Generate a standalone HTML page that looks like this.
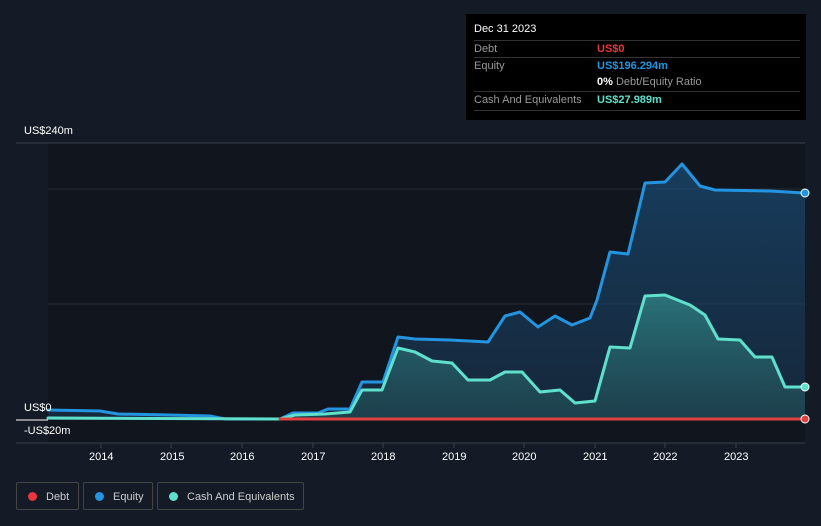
<!DOCTYPE html>
<html><head><meta charset="utf-8"><style>
body{margin:0;width:821px;height:526px;background:#151b26;font-family:"Liberation Sans",sans-serif;overflow:hidden;position:relative}
.t{position:absolute;font-size:11px;color:#fff}
.tip{position:absolute;left:466px;top:14px;width:340px;height:106px;background:#000}
.row{position:absolute;left:8px;width:326px;font-size:11px;color:#999;border-top:1px solid #333;height:17px;line-height:17px}
.leg{position:absolute;top:482px;height:28px;border:1px solid #444;border-radius:2px;color:#ccc;font-size:11px;line-height:28px;box-sizing:border-box}
.dot{display:inline-block;width:9px;height:9px;border-radius:50%;margin:0 9px 0 11px;vertical-align:-1px}
</style></head><body>
<svg width="821" height="526" style="position:absolute;left:0;top:0">
<defs>
<linearGradient id="ge" x1="0" y1="0" x2="0" y2="1"><stop offset="0" stop-color="#1a4a72" stop-opacity=".75"/><stop offset="1" stop-color="#1a3a58" stop-opacity=".5"/></linearGradient>
<linearGradient id="gc" x1="0" y1="0" x2="0" y2="1"><stop offset="0" stop-color="#3aa8a0" stop-opacity=".55"/><stop offset="1" stop-color="#2a6a6a" stop-opacity=".35"/></linearGradient>
</defs>
<rect x="48" y="143" width="757" height="300" fill="#10151e"/>
<line x1="16" y1="143" x2="805" y2="143" stroke="#3a404a"/>
<line x1="48" y1="189" x2="805" y2="189" stroke="#262c36"/>
<line x1="48" y1="304" x2="805" y2="304" stroke="#262c36"/>
<line x1="16" y1="443" x2="805" y2="443" stroke="#3a404a"/>
<line x1="16" y1="420" x2="48" y2="420" stroke="#fff"/>
<g stroke="#3a404a"><line x1="101" y1="443" x2="101" y2="448"/><line x1="171" y1="443" x2="171" y2="448"/><line x1="242" y1="443" x2="242" y2="448"/><line x1="313" y1="443" x2="313" y2="448"/><line x1="383" y1="443" x2="383" y2="448"/><line x1="454" y1="443" x2="454" y2="448"/><line x1="524" y1="443" x2="524" y2="448"/><line x1="595" y1="443" x2="595" y2="448"/><line x1="665" y1="443" x2="665" y2="448"/><line x1="736" y1="443" x2="736" y2="448"/></g>
<polygon fill="url(#ge)" points="48,410 100,411 118,414 170,415 210,416 225,419 280,419 293,413 318,413 328,409 350,409 362,382 383,382 398,337 415,339 450,340 488,342 505,316 520,312 538,327 555,316 572,325 590,318 597,300 610,252 628,254 645,183 665,182 682,164 700,186 715,190 770,191 805,193 805,420 48,420"/>
<polygon fill="url(#gc)" points="48,418 280,419 295,415 325,414 350,412 362,390 382,390 398,348 415,352 432,361 452,363 468,380 490,380 505,372 522,372 540,392 560,390 575,403 595,401 610,347 630,348 645,296 665,295 690,305 705,315 718,339 740,340 755,357 772,357 785,387 805,387 805,420 48,420"/>
<g fill="none" stroke-width="3" stroke-linejoin="round" stroke-linecap="round">
<polyline stroke="#2394e0" points="48,410 100,411 118,414 170,415 210,416 225,419 280,419 293,413 318,413 328,409 350,409 362,382 383,382 398,337 415,339 450,340 488,342 505,316 520,312 538,327 555,316 572,325 590,318 597,300 610,252 628,254 645,183 665,182 682,164 700,186 715,190 770,191 805,193"/>
<polyline stroke="#5ee0cc" points="48,418 280,419 295,415 325,414 350,412 362,390 382,390 398,348 415,352 432,361 452,363 468,380 490,380 505,372 522,372 540,392 560,390 575,403 595,401 610,347 630,348 645,296 665,295 690,305 705,315 718,339 740,340 755,357 772,357 785,387 805,387"/>
<polyline stroke="#e04040" points="280,419 805,419"/>
</g>
<circle cx="805" cy="193" r="4" fill="#2394e0" stroke="#fff"/>
<circle cx="805" cy="387" r="4" fill="#5ee0cc" stroke="#fff"/>
<circle cx="805" cy="419" r="4" fill="#e04040" stroke="#fff"/>
</svg>
<div class="t" style="left:24px;top:125px">US$240m</div>
<div class="t" style="left:24px;top:402px">US$0</div>
<div class="t" style="left:24px;top:425px">-US$20m</div>
<div class="t" style="left:89px;top:451px">2014</div><div class="t" style="left:160px;top:451px">2015</div><div class="t" style="left:230px;top:451px">2016</div><div class="t" style="left:301px;top:451px">2017</div><div class="t" style="left:371px;top:451px">2018</div><div class="t" style="left:442px;top:451px">2019</div><div class="t" style="left:512px;top:451px">2020</div><div class="t" style="left:583px;top:451px">2021</div><div class="t" style="left:653px;top:451px">2022</div><div class="t" style="left:724px;top:451px">2023</div>
<div class="tip">
<div style="position:absolute;left:8px;top:9px;color:#fff;font-size:11px">Dec 31 2023</div>
<div class="row" style="top:26px">Debt<span style="position:absolute;left:123px;color:#e8363e;font-weight:bold">US$0</span></div>
<div class="row" style="top:43px">Equity<span style="position:absolute;left:123px;color:#2394e0;font-weight:bold">US$196.294m</span></div>
<div class="row" style="top:60px;border:0"><span style="position:absolute;left:123px"><b style="color:#fff">0%</b> Debt/Equity Ratio</span></div>
<div class="row" style="top:77px">Cash And Equivalents<span style="position:absolute;left:123px;color:#5ee0cc;font-weight:bold">US$27.989m</span></div>
<div style="position:absolute;left:8px;top:96px;width:326px;border-top:1px solid #333"></div>
</div>
<div class="leg" style="left:16px;width:63px"><span class="dot" style="background:#e8363e"></span>Debt</div>
<div class="leg" style="left:83px;width:70px"><span class="dot" style="background:#2394e0"></span>Equity</div>
<div class="leg" style="left:157px;width:147px"><span class="dot" style="background:#5ee0cc"></span>Cash And Equivalents</div>
</body></html>
